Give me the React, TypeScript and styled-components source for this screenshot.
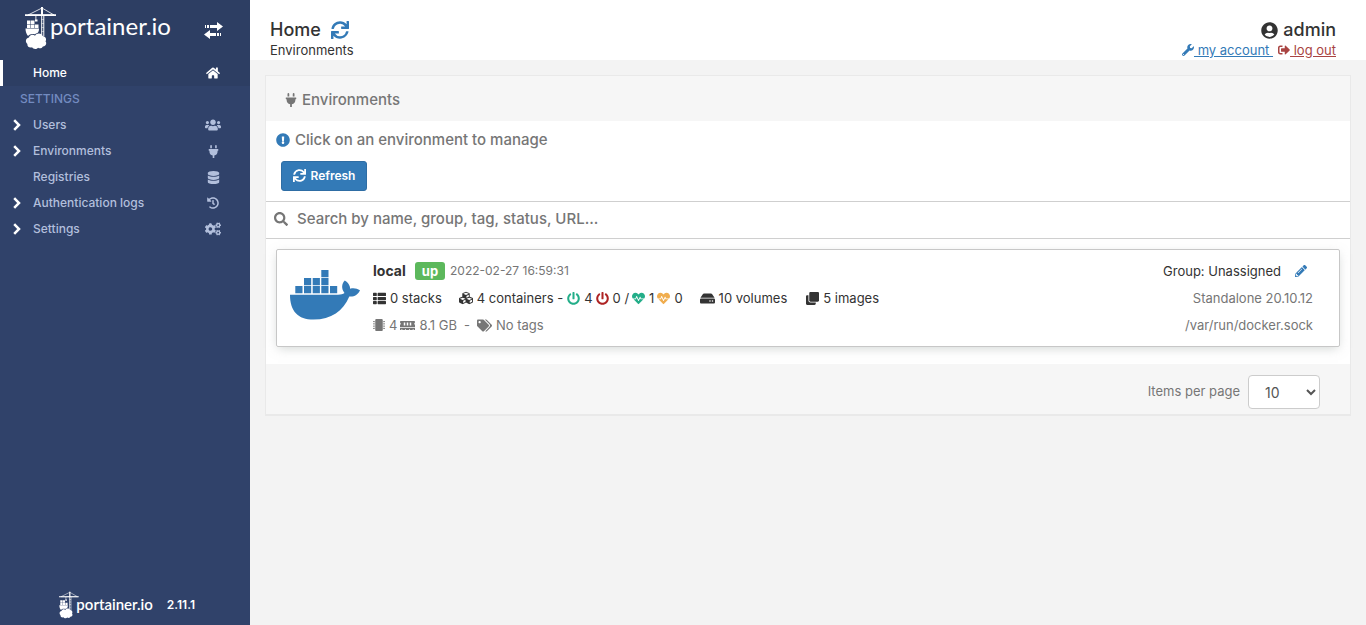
import React from "react";
import styled, { createGlobalStyle, css } from "styled-components";
import {
  FaHome, FaUsers, FaPlug, FaDatabase, FaHistory, FaCogs, FaSync, FaPowerOff, FaHeartbeat,
  FaHdd, FaClone, FaThList, FaCubes, FaMicrochip, FaMemory, FaTags, FaPencilAlt, FaWrench,
  FaSignOutAlt, FaUserCircle, FaExclamationCircle, FaSearch,
} from "react-icons/fa";

const blue = "#337ab7";

const GlobalStyle = createGlobalStyle`
  *, *::before, *::after { box-sizing: border-box; }
  body {
    margin: 0;
    background: #f3f3f3;
    color: #333;
    font-family: Inter, "Liberation Sans", sans-serif;
    font-size: 13px;
    line-height: 20px;
  }
  svg { flex: none; display: block; }
  button, input, select { font-family: inherit; }
`;

const Page = styled.div`
  display: flex;
  min-height: 100vh;
`;

const Sidebar = styled.aside`
  display: flex;
  flex: none;
  flex-direction: column;
  width: 250px;
  background: #30426a;
`;

const SidebarHeader = styled.div`
  display: flex;
  align-items: center;
  justify-content: space-between;
  height: 60px;
  padding: 0 27px 4px 25px;
  background: #2d3e63;
`;

const Brand = styled.a<{ $small?: boolean }>`
  display: flex;
  align-items: center;
  color: #fff;
  text-decoration: none;
  font-family: Lato, sans-serif;
  font-size: ${(p) => (p.$small ? 15 : 24)}px;
  line-height: ${(p) => (p.$small ? 28 : 44)}px;

  svg { margin-right: ${(p) => (p.$small ? -3 : -7)}px; }
  span { padding-bottom: ${(p) => (p.$small ? 1 : 4)}px; }
`;

const IconButton = styled.button`
  display: flex;
  padding: 0;
  border: 0;
  background: none;
  color: inherit;
  cursor: pointer;
`;

const ToggleButton = styled(IconButton)`
  margin-top: 4px;
  color: #fff;
`;

const Menu = styled.nav`
  display: flex;
  flex: 1;
  flex-direction: column;
`;

const MenuLink = styled.a<{ $active?: boolean }>`
  display: grid;
  grid-template-columns: 20px 1fr 16px;
  align-items: center;
  height: 26px;
  padding: 0 29px 0 10px;
  border-left: 3px solid transparent;
  color: #b2bfdc;
  font-weight: 500;
  font-size: 12px;
  text-decoration: none;

  > :last-child { justify-self: center; }
  ${(p) => p.$active && css`
    border-left-color: #fff;
    background: #2d3e63;
    color: #fff;
  `}
`;

const MenuTitle = styled.div`
  height: 26px;
  padding-left: 20px;
  color: #738bc0;
  font-weight: 500;
  font-size: 12px;
  line-height: 26px;
`;

const SidebarFooter = styled.div`
  display: flex;
  align-items: center;
  gap: 14px;
  padding: 0 0 6px 59px;
  color: #fff;
  font-weight: 600;
  font-size: 12px;
`;

const Main = styled.main`
  flex: 1;
  min-width: 0;
`;

const TopBar = styled.header`
  display: flex;
  justify-content: space-between;
  height: 60px;
  padding: 20px 30px 0 20px;
  background: #fff;
`;

const TitleRow = styled.div<{ $end?: boolean }>`
  display: flex;
  align-items: center;
  justify-content: ${(p) => (p.$end ? "flex-end" : "flex-start")};
  gap: ${(p) => (p.$end ? 5 : 10)}px;
  height: 20px;
`;

const Title = styled.h1`
  margin: 0;
  font-weight: 500;
  font-size: 18px;
  line-height: 20px;
`;

const Links = styled.div`
  display: flex;
  gap: 5px;
`;

const UserLink = styled.a<{ $danger?: boolean }>`
  display: flex;
  align-items: center;
  color: ${(p) => (p.$danger ? "#a94442" : blue)};
  text-decoration: none;

  span {
    text-decoration: underline;
    white-space: pre;
  }
`;

const Widget = styled.section`
  margin: 15px;
  border: 1px solid #e9e9e9;
  border-bottom-width: 2px;
  background: #fff;
`;

const WidgetHeader = styled.h2`
  display: flex;
  align-items: center;
  gap: 4px;
  height: 45px;
  margin: 0;
  padding: 3px 18px 0;
  background: #f6f6f6;
  color: #767676;
  font-weight: 500;
  font-size: 15px;
`;

const Hint = styled.p`
  display: flex;
  align-items: center;
  gap: 5px;
  margin: 0;
  padding: 9px 10px 11px;
  color: #767676;
  font-weight: 500;
  font-size: 15px;

  svg { color: ${blue}; }
`;

const RefreshButton = styled.button`
  display: flex;
  align-items: center;
  justify-content: center;
  gap: 5px;
  width: 86px;
  height: 30px;
  margin: 0 0 10px 15px;
  padding: 0 0 1px;
  border: 1px solid #2e6da4;
  border-radius: 3px;
  background: ${blue};
  color: #fff;
  font-weight: 600;
  font-size: 12px;
  cursor: pointer;
`;

const SearchBar = styled.label`
  display: flex;
  align-items: center;
  gap: 9px;
  height: 38px;
  padding: 0 8px 3px;
  border: solid #cfcfcf;
  border-width: 1px 0;
  color: #767676;
`;

const SearchInput = styled.input`
  flex: 1;
  padding: 0;
  border: 0;
  outline: 0;
  background: none;
  color: #767676;
  font-weight: 500;
  font-size: 15px;

  &::placeholder { color: #767676; opacity: 1; }
`;

const Card = styled.article`
  display: flex;
  align-items: center;
  height: 98px;
  margin: 10px 10px 17px;
  padding: 0 26px 0 13px;
  border: 1px solid #c7c7c7;
  border-radius: 2px;
  box-shadow: 0 3px 10px -2px rgba(161, 170, 166, 0.5);
`;

const Logo = styled.div`
  padding-bottom: 6px;
`;

const Details = styled.div`
  display: flex;
  flex: 1;
  flex-direction: column;
  gap: 5px;
  margin-left: 12px;
`;

const Line = styled.div<{ $muted?: boolean }>`
  display: flex;
  align-items: center;
  height: 22px;
  color: ${(p) => (p.$muted ? "#767676" : "#333")};
`;

const Name = styled.strong`
  width: 42px;
  font-weight: 700;
  font-size: 14px;
`;

const Badge = styled.span`
  width: 30px;
  margin-right: 5px;
  border-radius: 3px;
  background: #5cb85c;
  color: #fff;
  font-weight: 700;
  font-size: 13px;
  line-height: 18px;
  text-align: center;
`;

const Timestamp = styled.time`
  color: #767676;
  font-size: 12px;
`;

const Stat = styled.span<{ $after?: number; $tint?: string }>`
  display: flex;
  align-items: center;
  gap: 4px;
  margin-right: ${(p) => p.$after ?? 3}px;
  white-space: nowrap;

  svg { color: ${(p) => p.$tint ?? "inherit"}; }
`;

const Side = styled(Details)`
  flex: none;
  align-items: flex-end;
  margin: 0;
`;

const EditButton = styled(IconButton)`
  margin: 0 6px 0 14px;
  color: ${blue};
`;

const WidgetFooter = styled.footer`
  display: flex;
  align-items: center;
  justify-content: flex-end;
  height: 50px;
  padding: 6px 30px 0 0;
  background: #f6f6f6;
  color: #767676;
`;

const PageSizeLabel = styled.label`
  display: flex;
  align-items: center;
  gap: 8px;

  span { padding-bottom: 3px; }
`;

const PageSize = styled.select`
  width: 72px;
  height: 34px;
  padding: 0 0 0 12px;
  border: 1px solid #ccc;
  border-radius: 4px;
  background: #fff;
  color: #555;
  font-size: 14px;
`;

function CraneLogo({ height }: { height: number }) {
  return (
    <svg width={(height * 32) / 44} height={height} viewBox="0 0 32 44" fill="#fff" aria-hidden="true">
      <path d="M17 2 3 9H29Z" fill="none" stroke="#fff" strokeWidth="0.800" />
      <path d="M0 8.300h31v1.700H0z M16 1h2v8h-2z M16.200 10h1v19h-1z M18.300 10h1v20h-1z M10.500 10h.8v4h-.8z" />
      <path d="M16.500 13h2.500v.6h-2.500z M16.500 17h2.500v.6h-2.500z M16.500 21h2.500v.6h-2.500z M16.500 25h2.500v.6h-2.500z" />
      <path d="M2 14.500h3.500v3.500H2z M6 14.500h3.500v3.500H6z M2 18.500h3.500v3.500H2z M6 18.500h3.500v3.500H6z M10 18.500h3.500v3.500H10z M10 13.500h2.500v2H10z" />
      <path d="M.5 22.500h13.500c0 2-.5 3.500-1.500 4.500-1 .2-2 .6-2.700 1.200C7 27.500 4.500 28 3 30 1.500 28 .5 25.500.5 22.500z" />
      <path d="M4 31.500c.5-3 4.500-3.500 6-1.800 1.500-3 6.500-3 7.800.3 3 .3 4 3.300 2.700 5.200 1.800 2.500 0 5.300-2.600 5.300-1 2-3.400 2.300-4.800 1.200-1.500 1.800-5 1.600-6-.4-3 .8-5-1-4.700-3.300C-.2 36 .7 32 4 31.500z" />
    </svg>
  );
}

function TransferIcon() {
  return (
    <svg width="19" height="17" viewBox="0 0 19 17" fill="currentColor" aria-hidden="true">
      <path d="M1 3h1v3H1z M3 3h2v3H3z M6 3h7V0l6 4.500L13 9V6H6z" />
      <path d="M17 11h-1v3h1z M15 11h-2v3h2z M12 11H6V8l-6 4.500L6 17v-3h6z" />
    </svg>
  );
}

function Chevron() {
  return (
    <svg width="8" height="12" viewBox="0 0 8 12" fill="none" stroke="#fff" strokeWidth="2.500" aria-hidden="true">
      <path d="M1.200 1.200 6 6 1.200 10.800" />
    </svg>
  );
}

function WhaleLogo() {
  return (
    <svg width="71" height="50" viewBox="0 0 71 50" fill={blue} role="img" aria-label="Docker">
      <path d="M31.300 0h7.200v7.200h-7.200z M14 8h7.200v7.200H14z M22.700 8h7.200v7.200h-7.200z M31.300 8h7.200v7.200h-7.200z M5.300 16h7.200v7.200H5.300z M14 16h7.200v7.200H14z M22.700 16h7.200v7.200h-7.200z M31.300 16h7.200v7.200h-7.200z M40 16h7.200v7.200H40z" />
      <path d="M0 24.700H48C51 24.700 53 24.200 54.500 23C51.200 19 51.500 14 54.800 10.600C58 12.500 60 15.500 60.200 18.800C63.500 17.800 67 18.500 70 20.300C68 25 64 27 59.300 26.500C53 41 41.500 49.600 23.500 49.600C8 49.600 0 41 0 24.700Z" />
    </svg>
  );
}

const menuItems = [
  { label: "Users", icon: <FaUsers size={16} />, nested: true },
  { label: "Environments", icon: <FaPlug size={13} />, nested: true },
  { label: "Registries", icon: <FaDatabase size={13} />, nested: false },
  { label: "Authentication logs", icon: <FaHistory size={12} />, nested: true },
  { label: "Settings", icon: <FaCogs size={16} />, nested: true },
];

export default function App() {
  return (
    <>
      <GlobalStyle />
      <Page>
        <Sidebar>
          <SidebarHeader>
            <Brand href="#"><CraneLogo height={44} /><span>portainer.io</span></Brand>
            <ToggleButton aria-label="Toggle sidebar"><TransferIcon /></ToggleButton>
          </SidebarHeader>
          <Menu>
            <MenuLink href="#" $active><i /><span>Home</span><FaHome size={14} /></MenuLink>
            <MenuTitle>SETTINGS</MenuTitle>
            {menuItems.map((item) => (
              <MenuLink href="#" key={item.label}>
                {item.nested ? <Chevron /> : <i />}
                <span>{item.label}</span>
                {item.icon}
              </MenuLink>
            ))}
          </Menu>
          <SidebarFooter>
            <Brand href="#" $small><CraneLogo height={28} /><span>portainer.io</span></Brand>
            <span>2.11.1</span>
          </SidebarFooter>
        </Sidebar>
        <Main>
          <TopBar>
            <div>
              <TitleRow>
                <Title>Home</Title>
                <IconButton aria-label="Reload"><FaSync size={18} color={blue} /></IconButton>
              </TitleRow>
              <div>Environments</div>
            </div>
            <div>
              <TitleRow $end><FaUserCircle size={17} /><Title as="span">admin</Title></TitleRow>
              <Links>
                <UserLink href="#"><FaWrench size={12} /><span> my account </span></UserLink>
                <UserLink href="#" $danger><FaSignOutAlt size={12} /><span> log out</span></UserLink>
              </Links>
            </div>
          </TopBar>
          <Widget>
            <WidgetHeader><FaPlug size={14} />Environments</WidgetHeader>
            <Hint><FaExclamationCircle size={14} />Click on an environment to manage</Hint>
            <RefreshButton><FaSync size={13} />Refresh</RefreshButton>
            <SearchBar>
              <FaSearch size={14} />
              <SearchInput aria-label="Search" placeholder="Search by name, group, tag, status, URL..." />
            </SearchBar>
            <Card>
              <Logo><WhaleLogo /></Logo>
              <Details>
                <Line>
                  <Name>local</Name>
                  <Badge>up</Badge>
                  <Timestamp>2022-02-27 16:59:31</Timestamp>
                </Line>
                <Line>
                  <Stat $after={17}><FaThList size={13} />0 stacks</Stat>
                  <Stat $after={4}><FaCubes size={14} />4 containers -</Stat>
                  <Stat $tint="#23ae89"><FaPowerOff size={13} />4</Stat>
                  <Stat $tint="#ae2323"><FaPowerOff size={13} />0 /</Stat>
                  <Stat $tint="#23ae89"><FaHeartbeat size={13} />1</Stat>
                  <Stat $tint="#f0ad4e" $after={17}><FaHeartbeat size={13} />0</Stat>
                  <Stat $after={19}><FaHdd size={15} />10 volumes</Stat>
                  <Stat><FaClone size={13} />5 images</Stat>
                </Line>
                <Line $muted>
                  <Stat><FaMicrochip size={12} />4</Stat>
                  <Stat $after={7}><FaMemory size={15} />8.1 GB</Stat>
                  <Stat $after={7}>-</Stat>
                  <Stat><FaTags size={15} />No tags</Stat>
                </Line>
              </Details>
              <Side>
                <Line>Group: Unassigned<EditButton aria-label="Edit environment"><FaPencilAlt size={12} /></EditButton></Line>
                <Line $muted>Standalone 20.10.12</Line>
                <Line $muted>/var/run/docker.sock</Line>
              </Side>
            </Card>
            <WidgetFooter>
              <PageSizeLabel>
                <span>Items per page</span>
                <PageSize defaultValue="10">
                  <option>10</option>
                  <option>25</option>
                  <option>50</option>
                  <option>100</option>
                </PageSize>
              </PageSizeLabel>
            </WidgetFooter>
          </Widget>
        </Main>
      </Page>
    </>
  );
}
